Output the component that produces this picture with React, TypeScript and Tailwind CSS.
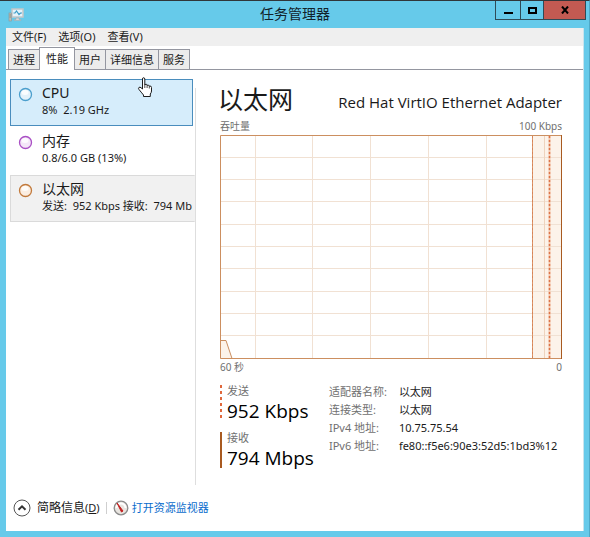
import React from "react";

type Resource = {
  name: string;
  detail: string;
  ring: string;
  fill: string;
  state: "hover" | "idle" | "selected";
};

const tabs = ["进程", "性能", "用户", "详细信息", "服务"];
const menus = ["文件(F)", "选项(O)", "查看(V)"];

const resources: Resource[] = [
  { name: "CPU", detail: "8%  2.19 GHz", ring: "#4b9fcd", fill: "#e3f1fa", state: "hover" },
  { name: "内存", detail: "0.8/6.0 GB (13%)", ring: "#a94fc4", fill: "#f4e6f8", state: "idle" },
  { name: "以太网", detail: "发送:  952 Kbps 接收:  794 Mb", ring: "#c27a3c", fill: "#fbeee2", state: "selected" },
];

const adapterInfo: [string, string][] = [
  ["适配器名称:", "以太网"],
  ["连接类型:", "以太网"],
  ["IPv4 地址:", "10.75.75.54"],
  ["IPv6 地址:", "fe80::f5e6:90e3:52d5:1bd3%12"],
];

const itemStyles: Record<Resource["state"], string> = {
  hover: "mr-0.5 border-[#4a8dbd] bg-[#d6edfb]",
  idle: "mr-0.5 border-transparent",
  selected: "border-[#dadada] border-r-transparent bg-[#f1f1f1]",
};

function AppIcon() {
  return (
    <svg width="16" height="16" viewBox="0 0 16 16" aria-hidden="true">
      <rect x="4" y="3" width="11" height="8" fill="#e4f3fa" stroke="#c3c7c9" strokeWidth="1.500" />
      <path d="M5.500 7h1.500l1.500-2 2.500 3.500 1.500-1.500h1.500" fill="none" stroke="#3c9cc7" strokeWidth="1.200" />
      <path d="M8 12h3v1.500h2v1H6v-1h2z" fill="#d6d6d6" stroke="#9aa6ac" strokeWidth=".5" />
      <rect x="1" y="7" width="2.500" height="8" fill="#b9bfb8" stroke="#8a9498" strokeWidth=".6" />
      <path d="M1.500 9h1.500M1.500 11h1.500" stroke="#7c7460" strokeWidth=".7" />
    </svg>
  );
}

function TitleBar() {
  return (
    <header className="flex h-[27px] items-start">
      <div className="flex w-[89px] shrink-0 pl-[2px] pt-[5px]">
        <AppIcon />
      </div>
      <h1 className="flex-1 text-center text-[14px] leading-[26px] text-[#12222a]">任务管理器</h1>
      <div className="mr-[-2px] flex h-[19px] w-[91px] shrink-0 border-x border-b border-[#2f4b57]">
        <button aria-label="最小化" className="flex w-[25px] items-center justify-center border-r border-[#2f4b57]">
          <svg width="9" height="9" viewBox="0 0 9 9"><path d="M0 6h9v2H0z" fill="#000" /></svg>
        </button>
        <button aria-label="最大化" className="flex w-[23px] items-center justify-center border-r border-[#2f4b57]">
          <svg width="9" height="7" viewBox="0 0 9 7"><path d="M1 1h7v5H1z" fill="none" stroke="#000" strokeWidth="2" /></svg>
        </button>
        <button aria-label="关闭" className="flex flex-1 items-center justify-center bg-[#c35a52]">
          <svg width="8" height="8" viewBox="0 0 8 8"><path d="M1 .5l6 7M7 .5l-6 7" stroke="#000" strokeWidth="2" /></svg>
        </button>
      </div>
    </header>
  );
}

function ResourceItem({ item }: { item: Resource }) {
  return (
    <li className={"h-[47px] border " + itemStyles[item.state]}>
      <button className="flex h-full w-full items-start gap-[9px] overflow-hidden pl-[7px] text-left">
        <svg width="15" height="15" viewBox="0 0 15 15" className="mt-[7px] shrink-0" aria-hidden="true">
          <circle cx="7.500" cy="7.500" r="6" fill={item.fill} stroke={item.ring} strokeWidth="1.300" />
          <ellipse cx="7" cy="5.500" rx="3.500" ry="2.500" fill="#fff" opacity=".8" />
        </svg>
        <span className="flex min-w-0 flex-col whitespace-pre">
          <span className="pt-1 text-[14px] leading-[18px] text-[#1a1a1a]">{item.name}</span>
          <span className="text-[11px] leading-4 text-[#1a1a1a]">{item.detail}</span>
        </span>
      </button>
    </li>
  );
}

function ThroughputChart() {
  const columns = [35, 92, 150, 208, 266, 324];
  const rows = [22, 44, 66, 89, 111, 133, 156, 178, 200];
  return (
    <svg className="block h-[224px] w-full" viewBox="0 0 342 224" preserveAspectRatio="none" role="img" aria-label="吞吐量">
      <rect width="342" height="224" fill="#fff" />
      <rect x="313" width="29" height="224" fill="#fcf3ea" />
      <path d="M0 206h6l6 18H0z" fill="#fcf3ea" />
      {columns.map((x) => (
        <path key={x} d={`M${x + 0.5} 1v222`} stroke="#f1e1d3" />
      ))}
      {rows.map((y) => (
        <path key={y} d={`M1 ${y + 0.5}h340`} stroke="#f1e1d3" />
      ))}
      <path d="M324.500 1v222" stroke="#efd3bd" />
      <path d="M0 205.500h6l6 18" fill="none" stroke="#c98d5f" />
      <path d="M312.500 1v222" stroke="#dd9468" />
      <path d="M312.500 1v222" stroke="#d68458" strokeDasharray="2 2" />
      <path d="M329.500 1v222" stroke="#f3c6ac" strokeWidth="2" />
      <path d="M329.500 1v222" stroke="#dd7448" strokeWidth="1.500" strokeDasharray="2 2" />
      <path d="M341.500 .5H.5v223h341" fill="none" stroke="#cc8f60" />
      <path d="M341.500 0v224" stroke="#a85a20" />
    </svg>
  );
}

function Rate({ label, value, dashed }: { label: string; value: string; dashed?: boolean }) {
  return (
    <div className="flex gap-[5px]">
      <svg className="mt-[2px] shrink-0" width="2" height="36" viewBox="0 0 2 36" aria-hidden="true">
        {dashed ? (
          <path d="M1 0v36" stroke="#e0683c" strokeWidth="2" strokeDasharray="3 3" />
        ) : (
          <path d="M1 0v36" stroke="#a85a20" strokeWidth="2" />
        )}
      </svg>
      <dl>
        <dt className="text-[11px] leading-4 text-[#707070]">{label}</dt>
        <dd className="whitespace-nowrap font-['Open_Sans','Noto_Sans_CJK_SC',sans-serif] text-[19px] leading-6 text-black">{value}</dd>
      </dl>
    </div>
  );
}

function HandCursor() {
  return (
    <svg className="pointer-events-none absolute left-[137px] top-[76px]" width="17" height="21" viewBox="0 0 17 21" aria-hidden="true">
      <path
        d="M5.500 12V2Q5.500.7 6.600.7T7.800 2v5.500q2-.8 2.300.7 1.800-.6 2.200.9 2.200-.5 2.200 1.400v3.500q0 1.500-1.200 3V19.500H6.500V18Q4 15 2 12.500 1 11 2 10.400t2 .3z"
        fill="#fff"
        stroke="#1c1c1c"
        strokeWidth="1"
      />
      <path d="M7.800 7v4M10.100 8v3M12.300 9v2.500" stroke="#1c1c1c" strokeWidth=".8" />
    </svg>
  );
}

export default function App() {
  return (
    <div className="relative flex min-h-screen flex-col border-r border-t border-r-[#4fa9c8] border-t-[#30363a] bg-[#66caea] pb-[6px] pl-[6px] pr-[5px] font-['Noto_Sans','Noto_Sans_CJK_SC',sans-serif] text-[#1a1a1a]">
      <TitleBar />
      <div className="flex flex-1 flex-col border-r border-[#c8e4ee] bg-white">
        <nav className="flex h-[18px] gap-3 bg-[#efefef] pl-[6px]">
          {menus.map((menu) => (
            <button key={menu} className="text-[11px] leading-[18px]">{menu}</button>
          ))}
        </nav>
        <div role="tablist" className="flex h-6 items-end border-b border-[#9496a0] pl-[2px]">
          {tabs.map((tab) => (
            <button
              key={tab}
              role="tab"
              aria-selected={tab === "性能"}
              className={
                tab === "性能"
                  ? "-mb-px -ml-px h-[23px] border-x border-t border-[#9496a0] bg-white px-[6px] text-[11px] leading-[22px]"
                  : "h-5 border-r border-t border-[#9496a0] bg-[#ececec] px-1 text-[11px] leading-5 first:border-l"
              }
            >
              {tab}
            </button>
          ))}
        </div>
        <main className="flex flex-1 pl-1 pr-[21px] pt-[9px]">
          <ul className="flex w-[185px] shrink-0 flex-col gap-px">
            {resources.map((item) => (
              <ResourceItem key={item.name} item={item} />
            ))}
          </ul>
          <div className="mt-[9px] w-px shrink-0 bg-[#dedede]" />
          <section className="min-w-0 flex-1 pl-6">
            <div className="flex h-10 items-end justify-between whitespace-nowrap">
              <h2 className="-ml-[2px] text-[25px] leading-10">以太网</h2>
              <p className="font-['Open_Sans','Noto_Sans_CJK_SC',sans-serif] text-[15px] leading-[34px]">Red Hat VirtIO Ethernet Adapter</p>
            </div>
            <div className="flex justify-between pb-[2px] text-[10px] leading-[14px] text-[#707070]">
              <span>吞吐量</span>
              <span>100 Kbps</span>
            </div>
            <ThroughputChart />
            <div className="flex justify-between text-[10px] leading-4 text-[#707070]">
              <span>60 秒</span>
              <span>0</span>
            </div>
            <div className="flex gap-[15px] pt-2">
              <div className="flex flex-col gap-[7px]">
                <Rate label="发送" value="952 Kbps" dashed />
                <Rate label="接收" value="794 Mbps" />
              </div>
              <dl className="grid grid-cols-[auto_auto] content-start gap-x-3 whitespace-nowrap text-[11px] leading-[18px]">
                {adapterInfo.map(([label, value]) => (
                  <React.Fragment key={label}>
                    <dt className="text-[#707070]">{label}</dt>
                    <dd>{value}</dd>
                  </React.Fragment>
                ))}
              </dl>
            </div>
          </section>
        </main>
        <footer className="flex h-[46px] items-center gap-[6px] pl-[7px]">
          <button className="flex items-center gap-[6px] whitespace-nowrap text-[12px] leading-5">
            <svg width="18" height="18" viewBox="0 0 18 18" aria-hidden="true">
              <circle cx="9" cy="9" r="8" fill="#fff" stroke="#555" />
              <path d="M5.500 10.800L9 7.300l3.500 3.500" fill="none" stroke="#333" strokeWidth="2" />
            </svg>
            <span>
              简略信息<span className="text-[11px]">(<u>D</u>)</span>
            </span>
          </button>
          <span className="h-3 w-px bg-[#cfcfcf]" />
          <a href="#resource-monitor" className="flex items-center gap-[3px] whitespace-nowrap text-[11px] leading-5 text-[#0a6ccc]">
            <svg width="16" height="16" viewBox="0 0 16 16" aria-hidden="true">
              <circle cx="8" cy="8" r="6.800" fill="#e9e5e0" stroke="#8b8b8b" strokeWidth="1.300" />
              <path d="M3.500 8a4.500 4.500 0 0 1 9 0" fill="none" stroke="#fff" strokeWidth="2" />
              <path d="M4 3l6 8-1.500 1z" fill="#c22222" stroke="#c22222" />
            </svg>
            打开资源监视器
          </a>
        </footer>
      </div>
      <HandCursor />
    </div>
  );
}
